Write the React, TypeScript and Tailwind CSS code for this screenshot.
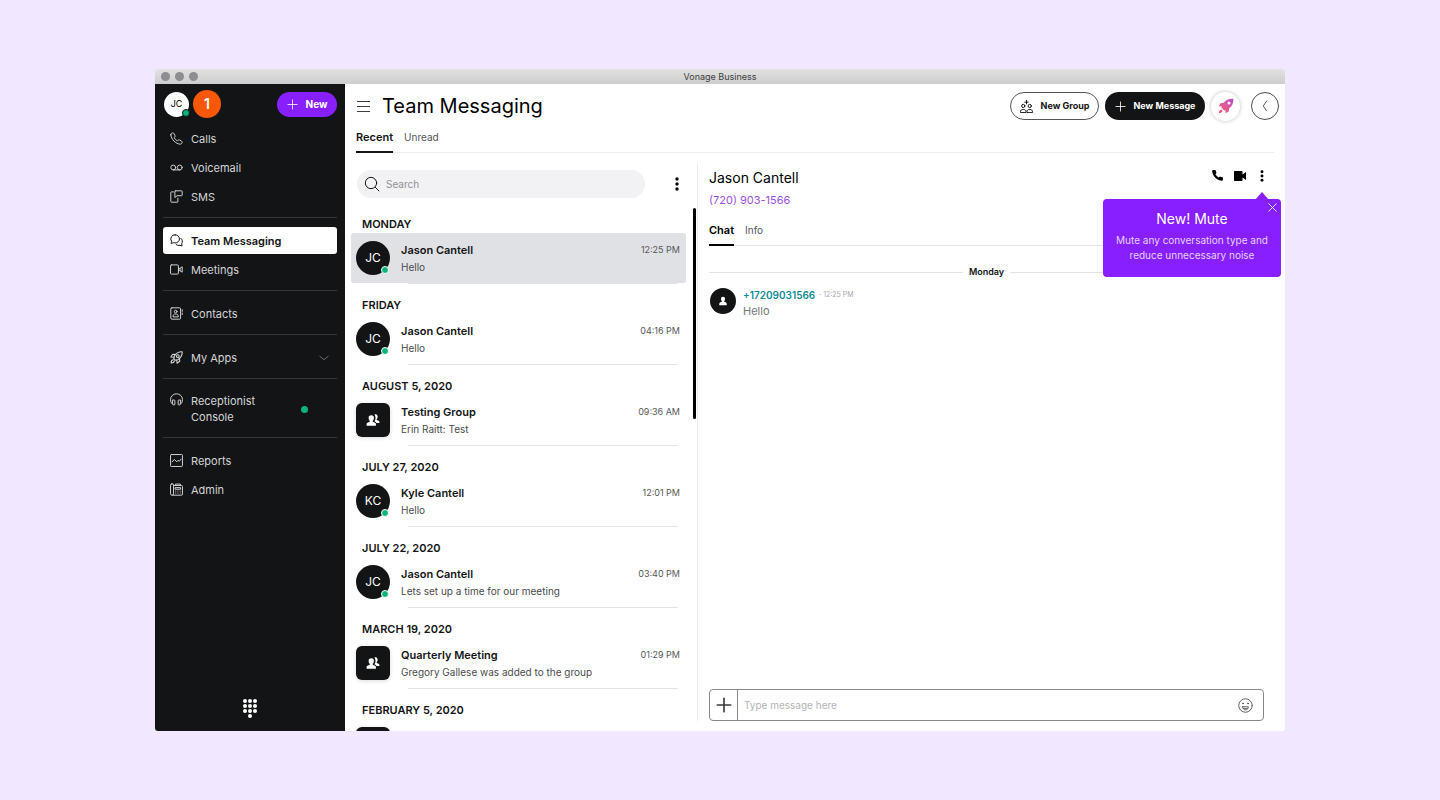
import React from "react";
import clsx from "clsx";

type IconProps = { className?: string };

/* ---------- ICONS ---------- */

const Line = ({
  className,
  width = 1.8,
  children,
}: IconProps & { width?: number; children: React.ReactNode }) => (
  <svg
    viewBox="0 0 24 24"
    fill="none"
    stroke="currentColor"
    strokeWidth={width}
    strokeLinecap="round"
    strokeLinejoin="round"
    className={clsx("shrink-0", className)}
    aria-hidden="true"
  >
    {children}
  </svg>
);

const handset =
  "M22 16.9v3a2 2 0 0 1-2.2 2 19.8 19.8 0 0 1-8.6-3.1 19.5 19.5 0 0 1-6-6A19.8 19.8 0 0 1 2.1 4.2 2 2 0 0 1 4.1 2h3a2 2 0 0 1 2 1.7c.1 1 .4 1.9.7 2.8a2 2 0 0 1-.5 2.1L8.1 9.9a16 16 0 0 0 6 6l1.3-1.3a2 2 0 0 1 2.1-.4c.9.3 1.8.6 2.8.7a2 2 0 0 1 1.7 2z";

const PhoneIcon = ({ className }: IconProps) => (
  <Line className={className}>
    <path d="M1.500 5C2 13.500 10.500 22 19 22.500c1.500 0 3.500-1.800 3.500-3.500 0-1-.5-1.600-1.200-2.100l-3.300-2c-1.200-.8-2.300-.6-3.200.4l-1 1.200c-2.500-1.200-5.100-3.800-6.300-6.300l1.200-1c1-.9 1.200-2 .4-3.200l-2-3.300C6.600 2 6 1.500 5 1.500 3.300 1.500 1.500 3.500 1.500 5z" />
  </Line>
);

const VoicemailIcon = ({ className }: IconProps) => (
  <Line className={className}>
    <circle cx="6" cy="12" r="4.500" />
    <circle cx="18" cy="12" r="4.500" />
    <path d="M6 16.500h12" />
  </Line>
);

const SmsIcon = ({ className }: IconProps) => (
  <Line className={className}>
    <path d="M6.500 3.500h-4a1 1 0 0 0-1 1V21.500a1 1 0 0 0 1 1h11a1 1 0 0 0 1-1V15" />
    <path d="M10 1.500h11.500a1 1 0 0 1 1 1v7a1 1 0 0 1-1 1H13L9 14V2.500a1 1 0 0 1 1-1z" />
  </Line>
);

const ChatIcon = ({ className }: IconProps) => (
  <Line className={className}>
    <path d="M9.500 1.500a8 7.500 0 0 1 0 15c-1 0-2-.2-3-.5L2 17.500l1-4a7.500 7.500 0 0 1 6.500-12z" />
    <path d="M20 8a7 7 0 0 1 1.500 10l.8 4-4-1a8 8 0 0 1-7-1.500" />
  </Line>
);

const MeetingIcon = ({ className }: IconProps) => (
  <Line className={className}>
    <rect x="1" y="3.500" width="14.500" height="17" rx="1.500" />
    <path d="M15.500 10h2.500l4.500-3v10L18 14h-2.500" />
    <path d="M18.500 10v4" />
  </Line>
);

const ContactIcon = ({ className }: IconProps) => (
  <Line className={className}>
    <rect x="1.500" y="1.500" width="18" height="21" rx="2" />
    <path d="M22.500 5v3M22.500 11v3" />
    <circle cx="10.500" cy="8.500" r="2.500" />
    <path d="M5.500 17.500c0-3 2-4.500 5-4.500s5 1.500 5 4.500z" />
  </Line>
);

const AppsIcon = ({ className }: IconProps) => (
  <Line className={className} width={2}>
    <path d="M22.500 1.500c-6-.3-11 2-14.500 8l-1 5 2.500 2.500 5-1c6-3.500 8.300-8.500 8-14.500z" />
    <path d="M10 6.500 5 6l-3.500 5 6 .5M17.500 14l.5 5-5 3.500-.5-6" />
    <circle cx="14.500" cy="9.500" r="2.500" />
    <path d="M6 16c-3 0-4 2.500-4 6 3.500 0 6-1 6-4" />
  </Line>
);

const HeadsetIcon = ({ className }: IconProps) => (
  <Line className={className}>
    <path d="M4.500 20.500C.5 17.500 1 12.500 1 12a11 10.500 0 0 1 22 0c0 .5.5 5.500-3.500 8.500" />
    <path d="M5 13h2.500a1.500 1.500 0 0 1 1.500 1.500v6A1.500 1.500 0 0 1 7.500 22h-1A1.500 1.500 0 0 1 5 20.500zM19 13h-2.500a1.500 1.500 0 0 0-1.500 1.500v6a1.500 1.500 0 0 0 1.500 1.500h1a1.500 1.500 0 0 0 1.500-1.500z" />
  </Line>
);

const ReportIcon = ({ className }: IconProps) => (
  <Line className={className}>
    <rect x="1" y="1" width="22" height="22" rx="1.500" />
    <path d="m4 14.500 4-4.500 4.500 4.500 2.500-3 2 2 3.500-4" />
  </Line>
);

const AdminIcon = ({ className }: IconProps) => (
  <Line className={className}>
    <rect x="1" y="1.500" width="5.500" height="21" rx="2.500" />
    <path d="M6.500 4.500H21a2 2 0 0 1 2 2V20.500a2 2 0 0 1-2 2H5" />
    <path d="M10 4.500V2h9v2.500M10 8.500h9.500v3H10zM10.500 15h.1M14.500 15h.1M18.800 15h.1M10.500 18.500h.1M14.500 18.500h.1M18.800 18.500h.1" />
  </Line>
);

const PlusIcon = ({ className, width = 1.8 }: IconProps & { width?: number }) => (
  <Line className={className} width={width}>
    <path d="M12 2v20M2 12h20" />
  </Line>
);

const NewGroupIcon = ({ className }: IconProps) => (
  <Line className={className}>
    <path d="M12 .8v6.400M8.800 4h6.400" />
    <circle cx="6" cy="11" r="3" />
    <circle cx="18" cy="11" r="3" />
    <path d="M1 22.500v-1.500C1 19 3 17.500 6 17.500s5 1.500 5 3.500v1.500zM13 22.500v-1.500c0-2 2-3.500 5-3.500s5 1.500 5 3.500v1.500z" />
  </Line>
);

const RocketIcon = ({ className }: IconProps) => (
  <svg viewBox="0 0 24 24" className={className} aria-hidden="true">
    <defs>
      <linearGradient id="rocket" x1="1" y1="0" x2="0" y2="1">
        <stop offset="0" stopColor="#b54ad0" />
        <stop offset="0.5" stopColor="#e0599c" />
        <stop offset="1" stopColor="#f0566a" />
      </linearGradient>
    </defs>
    <path
      fill="url(#rocket)"
      fillRule="evenodd"
      d="M23 1c-6.500-.3-11 1.500-14.500 6.200L4 7.800 1 12.500l5 .3-.8 1.700 4.300 4.300 1.700-.8.3 5 4.700-3 .6-4.500C21.500 12 23.300 7.500 23 1zM16.500 5.200a2.300 2.300 0 1 1 0 4.600 2.300 2.300 0 0 1 0-4.600zM5 17.200c-2 .4-3.500 2.800-3.700 5.500 2.700-.2 5.100-1.700 5.500-3.700z"
    />
  </svg>
);

const PeopleIcon = ({ className }: IconProps) => (
  <svg viewBox="0 0 24 24" fill="currentColor" className={className} aria-hidden="true">
    <path d="M9 4a4.500 4.500 0 0 0-4.500 4.800c0 2 .8 3.700 2 4.600v1.400l-4 1.800C1.500 17.100 1 18 1 19v3h16v-3c0-1-.5-1.900-1.500-2.400l-4-1.800v-1.400c1.200-.9 2-2.600 2-4.600A4.500 4.500 0 0 0 9 4z" />
    <path d="M14.500 2.500c2.800-1.500 5.500.3 5.500 3.700 0 1.800-.6 3.300-1.600 4.100v1.500l3.200 1.500c.9.500 1.400 1.200 1.400 2.200V17h-5c-.7-1.200-1.700-2-3.400-2.700 1.200-1.500 1.700-3.500 1.700-5.800 0-2.200-.7-4.400-1.800-6z" />
  </svg>
);

const PersonIcon = ({ className }: IconProps) => (
  <svg viewBox="0 0 24 24" fill="currentColor" className={className} aria-hidden="true">
    <path d="M12 2a5 5 0 0 1 5 5.200c0 2.200-.9 4-2.300 5v1.300c3.800.6 6.300 2.600 6.300 5.500v3H3v-3c0-2.900 2.500-4.900 6.300-5.500v-1.300C7.900 11.200 7 9.400 7 7.200A5 5 0 0 1 12 2z" />
  </svg>
);

const KebabIcon = ({ className }: IconProps) => (
  <svg viewBox="0 0 4 14" fill="currentColor" className={className} aria-hidden="true">
    <circle cx="2" cy="2" r="1.700" />
    <circle cx="2" cy="7" r="1.700" />
    <circle cx="2" cy="12" r="1.700" />
  </svg>
);

const SmileyIcon = ({ className }: IconProps) => (
  <Line className={className} width={1.5}>
    <circle cx="12" cy="12" r="10.800" />
    <path d="M7.500 14h9c0 3-1.800 5-4.500 5s-4.500-2-4.500-5zM9.500 17h5" />
    <circle cx="8" cy="8.800" r=".8" fill="currentColor" />
    <circle cx="16" cy="8.800" r=".8" fill="currentColor" />
  </Line>
);

const DialpadIcon = ({ className }: IconProps) => (
  <svg viewBox="0 0 16 20" fill="currentColor" className={className} aria-hidden="true">
    {[2, 7, 12].map((y) =>
      [3, 8, 13].map((x) => <circle key={`${x}-${y}`} cx={x} cy={y} r="2" />)
    )}
    <circle cx="8" cy="17" r="2" />
  </svg>
);

/* ---------- DATA ---------- */

const navGroups = [
  [
    { label: "Calls", icon: PhoneIcon },
    { label: "Voicemail", icon: VoicemailIcon },
    { label: "SMS", icon: SmsIcon },
  ],
  [
    { label: "Team Messaging", icon: ChatIcon, active: true },
    { label: "Meetings", icon: MeetingIcon },
  ],
  [{ label: "Contacts", icon: ContactIcon }],
  [{ label: "My Apps", icon: AppsIcon, expandable: true }],
  [{ label: "Receptionist Console", icon: HeadsetIcon, online: true }],
  [
    { label: "Reports", icon: ReportIcon },
    { label: "Admin", icon: AdminIcon },
  ],
] as {
  label: string;
  icon: React.FC<IconProps>;
  active?: boolean;
  expandable?: boolean;
  online?: boolean;
}[][];

const conversations = [
  { day: "MONDAY", name: "Jason Cantell", initials: "JC", text: "Hello", time: "12:25 PM", selected: true },
  { day: "FRIDAY", name: "Jason Cantell", initials: "JC", text: "Hello", time: "04:16 PM" },
  { day: "AUGUST 5, 2020", name: "Testing Group", text: "Erin Raitt: Test", time: "09:36 AM" },
  { day: "JULY 27, 2020", name: "Kyle Cantell", initials: "KC", text: "Hello", time: "12:01 PM" },
  { day: "JULY 22, 2020", name: "Jason Cantell", initials: "JC", text: "Lets set up a time for our meeting", time: "03:40 PM" },
  { day: "MARCH 19, 2020", name: "Quarterly Meeting", text: "Gregory Gallese was added to the group", time: "01:29 PM" },
  { day: "FEBRUARY 5, 2020", name: "", text: "", time: "" },
];

/* ---------- SIDEBAR ---------- */

const Sidebar = () => (
  <aside className="w-[190px] shrink-0 bg-[#131415] text-[#d4d5d6] flex flex-col px-2">
    <div className="h-[41px] shrink-0 flex items-center pb-px pl-px">
      <div className="relative size-[25px] rounded-full bg-white text-black text-[9px] flex items-center justify-center">
        JC
        <span className="absolute -right-px bottom-0 size-2 rounded-full bg-[#0eb27b] border border-[#131415]" />
      </div>
      <span className="ml-1 size-7 rounded-full bg-[#fa5709] text-white text-sm font-semibold flex items-center justify-center">
        1
      </span>
      <button className="ml-auto h-[25px] w-[60px] rounded-full bg-[#871fff] text-white text-[10px] font-bold flex items-center justify-center gap-2">
        <PlusIcon className="size-[11px]" />
        New
      </button>
    </div>

    <nav className="flex flex-col">
      {navGroups.map((group, i) => (
        <ul
          key={i}
          className={clsx("flex flex-col gap-0.5", i > 0 && "mt-[7px] border-t border-[#34363a] pt-[9px]")}
        >
          {group.map(({ label, icon: Icon, active, expandable, online }) => (
            <li key={label}>
              <a
                href="#"
                className={clsx(
                  "flex gap-2 pl-[7px] pr-2 rounded-[3px] text-[11px] leading-4 w-full",
                  online ? "items-start py-[5px]" : "h-[27px] items-center",
                  active && "bg-white text-[#131415] font-semibold"
                )}
              >
                <Icon className="size-[13px]" />
                <span className={clsx(online && "w-[70px]")}>{label}</span>
                {expandable && (
                  <Line className="size-[10px] ml-auto text-[#8b8d90]">
                    <path d="m2 8 10 8 10-8" />
                  </Line>
                )}
                {online && (
                  <span className="size-[7px] rounded-full bg-[#0eb27b] ml-auto mr-[21px] self-center" />
                )}
              </a>
            </li>
          ))}
        </ul>
      ))}
    </nav>

    <button aria-label="Dialpad" className="mt-auto mb-3 self-center text-white">
      <DialpadIcon className="w-4 h-5" />
    </button>
  </aside>
);

/* ---------- HEADER ---------- */

const Header = () => (
  <header className="shrink-0 pl-[11px] pr-[6px]">
    <div className="h-11 flex items-center">
      <button aria-label="Menu" className="mr-[11px]">
        <svg viewBox="0 0 15 13" stroke="#3c3d40" className="w-[15px] h-[13px]" aria-hidden="true">
          <path d="M1 1.500h13M1 6.500h13M1 11.500h13" />
        </svg>
      </button>
      <h1 className="text-xl font-normal text-black">Team Messaging</h1>

      <div className="ml-auto flex items-center gap-1.5 text-[9px] font-bold">
        <button className="h-7 w-[89px] rounded-full border border-[#55565a] text-[#131415] flex items-center justify-center gap-2">
          <NewGroupIcon className="size-[13px]" />
          New Group
        </button>
        <button className="h-7 w-[100px] rounded-full bg-[#131415] text-white flex items-center justify-center gap-2">
          <PlusIcon className="size-[11px]" />
          New Message
        </button>
        <button
          aria-label="What's new"
          className="size-[29px] rounded-full bg-white shadow-[0_0_4px_rgba(0,0,0,0.25)] flex items-center justify-center"
        >
          <RocketIcon className="size-4" />
        </button>
        <button
          aria-label="Back"
          className="ml-[5px] size-7 rounded-full border border-[#4a4b4e] flex items-center justify-center"
        >
          <svg viewBox="0 0 6 14" fill="none" stroke="#3c3d40" className="w-1.5 h-3" aria-hidden="true">
            <path d="M5 1 1 7l4 6" />
          </svg>
        </button>
      </div>
    </div>

    <div className="mr-[5px] h-[25px] flex gap-[11px] border-b border-[#ececed] leading-[18px]">
      <button className="-mb-px border-b-2 border-[#131415] text-[11px] font-semibold text-[#131415] flex">
        Recent
      </button>
      <button className="text-[10px] text-[#55565a] flex">Unread</button>
    </div>
  </header>
);

/* ---------- CONVERSATION LIST ---------- */

const ConversationList = () => (
  <section className="w-[352px] shrink-0 flex flex-col min-h-0">
    <div className="flex items-center pl-3 pr-[18px] pt-[17px] pb-[5px]">
      <label className="flex-1 h-7 rounded-full bg-[#f2f2f4] flex items-center pl-[7px] gap-1.5">
        <Line className="size-4 text-[#131415]" width={1.5}>
          <circle cx="10.500" cy="10.500" r="8.500" />
          <path d="m17 17 5.500 5.500" />
        </Line>
        <input
          type="text"
          aria-label="Search"
          placeholder="Search"
          className="flex-1 min-w-0 bg-transparent outline-none text-[10px] placeholder:text-[#909195]"
        />
      </label>
      <button aria-label="List options" className="ml-[30px] text-black">
        <KebabIcon className="w-1 h-[14px]" />
      </button>
    </div>

    <div className="flex-1 min-h-0 flex">
      <ul className="flex-1 min-w-0 overflow-hidden pl-1.5">
        {conversations.map((c) => (
          <li key={c.day}>
            <h2 className="h-[30px] pt-[11px] pl-[11px] text-[11px] leading-5 font-semibold text-[#131415]">
              {c.day}
            </h2>
            <div
              className={clsx(
                "h-[50px] rounded-[3px] flex items-center pl-[5px] pr-1.5",
                c.selected && "bg-[#e0e1e5]"
              )}
            >
              <div
                className={clsx(
                  "relative size-[34px] shrink-0 bg-[#131415] text-white text-xs flex items-center justify-center",
                  c.initials ? "rounded-full" : "rounded-md shadow-[0_1px_4px_rgba(0,0,0,0.15)]"
                )}
              >
                {c.initials ? (
                  <>
                    {c.initials}
                    <span className="absolute right-px bottom-px size-2 rounded-full bg-[#0eb27b] border border-white" />
                  </>
                ) : (
                  <PeopleIcon className="size-[14px]" />
                )}
              </div>
              <div className="ml-[11px] flex-1 min-w-0">
                <div className="flex items-center justify-between">
                  <p className="text-[11px] leading-[18px] font-semibold text-[#131415]">{c.name}</p>
                  <time className="text-[9px] leading-[18px] text-[#55565a]">{c.time}</time>
                </div>
                <p className="h-4 text-[10px] leading-4 text-[#4a4b4e]">{c.text}</p>
              </div>
            </div>
            <div className="h-px ml-[57px] mr-2 bg-[#e3e4e6]" />
          </li>
        ))}
      </ul>
      <div className="w-[11px] shrink-0 pl-[7px] pt-[5px]">
        <div className="w-[3px] h-[211px] rounded-full bg-black" />
      </div>
    </div>
  </section>
);

/* ---------- CHAT ---------- */

const MutePopover = () => (
  <div className="absolute right-1 top-[46px] w-[178px] h-[78px] rounded-[4px] bg-[#871fff] text-white text-center pt-[11px] z-10">
    <svg viewBox="0 0 14 8" fill="#871fff" className="absolute -top-[7px] right-3 w-3.5 h-2" aria-hidden="true">
      <path d="M0 8 7 0l7 8z" />
    </svg>
    <button aria-label="Close" className="absolute top-1 right-1">
      <Line className="size-[9px]" width={2.4}>
        <path d="m2 2 20 20M22 2 2 22" />
      </Line>
    </button>
    <h3 className="text-sm leading-[18px]">New! Mute</h3>
    <p className="mt-[5px] text-[10px] leading-[15px] text-[#e6d2ff]">
      Mute any conversation type and
      <br />
      reduce unnecessary noise
    </p>
  </div>
);

const Chat = () => (
  <section className="relative flex-1 min-w-0 flex flex-col">
    <div className="flex-1 min-h-0 mt-[11px] mb-[10px] border-l border-[#ececed] pl-[11px] pr-[21px] flex flex-col">
      <div className="flex justify-between">
        <div className="pt-1">
          <h2 className="text-sm leading-5 text-black">Jason Cantell</h2>
          <a href="#" className="block mt-0.5 text-[11px] leading-5 text-[#9b51e0]">
            (720) 903-1566
          </a>
        </div>
        <div className="h-[23px] flex items-center gap-2.5 text-black">
          <button aria-label="Call">
            <svg viewBox="0 0 24 24" fill="currentColor" className="size-[13px]" aria-hidden="true">
              <path d={handset} />
            </svg>
          </button>
          <button aria-label="Video call">
            <svg viewBox="0 0 24 20" fill="currentColor" className="w-3 h-[10px]" aria-hidden="true">
              <path d="M1.500 0h14c1 0 1.500.6 1.500 1.500V7l7-5v16l-7-5v5.500c0 .9-.5 1.500-1.500 1.500h-14C.6 20 0 19.400 0 18.500v-17C0 .6.6 0 1.500 0z" />
            </svg>
          </button>
          <button aria-label="More" className="ml-1">
            <KebabIcon className="w-1 h-3" />
          </button>
        </div>
      </div>

      <div className="mt-[11px] h-[25px] flex gap-[11px] border-b border-[#e3e4e6] leading-[18px]">
        <button className="-mb-px border-b-2 border-black text-[11px] font-semibold text-black flex">Chat</button>
        <button className="text-[10px] text-[#55565a] flex">Info</button>
      </div>

      <div className="mt-4 flex items-center gap-[6px] text-[9px] leading-5 font-semibold text-[#131415]">
        <span className="h-px flex-1 bg-[#e3e4e6]" />
        Monday
        <span className="h-px flex-1 bg-[#e3e4e6]" />
      </div>

      <article className="mt-[5px] pl-px flex">
        <div className="mt-px size-[26px] rounded-full bg-[#131415] text-white flex items-center justify-center">
          <PersonIcon className="size-[10px]" />
        </div>
        <div className="ml-[7px]">
          <p className="flex items-center gap-1 text-[10px] leading-4 font-semibold text-[#0e8a94]">
            +17209031566
            <time className="text-[7px] font-normal text-[#a8a9ac]">· 12:25 PM</time>
          </p>
          <p className="text-[11px] leading-4 text-[#75767a]">Hello</p>
        </div>
      </article>

      <form className="mt-auto h-8 flex rounded-[4px] border border-[#87888c]">
        <button
          type="button"
          aria-label="Add attachment"
          className="w-7 border-r border-[#87888c] flex items-center justify-center text-[#3c3d40]"
        >
          <PlusIcon className="size-4" width={2.5} />
        </button>
        <input
          type="text"
          aria-label="Message"
          placeholder="Type message here"
          className="flex-1 min-w-0 pl-1.5 bg-transparent outline-none text-[10px] placeholder:text-[#b3b4b7]"
        />
        <button type="button" aria-label="Emoji" className="px-2.5 text-[#55565a]">
          <SmileyIcon className="size-[15px]" />
        </button>
      </form>
    </div>
    <MutePopover />
  </section>
);

const App = () => {
  return (
    <div className="h-screen bg-[#f1e7ff] px-[155px] py-[69px] font-['Inter','Liberation_Sans',sans-serif]">
      <div className="h-full flex flex-col bg-white rounded-[3px] overflow-hidden">
        <div className="relative h-[15px] shrink-0 flex items-center justify-center bg-linear-to-b from-[#e2e2e2] to-[#cdcdcd] text-[9px] leading-none text-[#404040]">
          <div className="absolute left-[6px] flex gap-[5px]">
            <span className="size-[9px] rounded-full bg-[#8d8d92]" />
            <span className="size-[9px] rounded-full bg-[#8d8d92]" />
            <span className="size-[9px] rounded-full bg-[#8d8d92]" />
          </div>
          Vonage Business
        </div>

        <div className="flex-1 min-h-0 flex">
          <Sidebar />
          <main className="flex-1 min-w-0 flex flex-col">
            <Header />
            <div className="flex-1 min-h-0 flex">
              <ConversationList />
              <Chat />
            </div>
          </main>
        </div>
      </div>
    </div>
  );
};

export default App;
